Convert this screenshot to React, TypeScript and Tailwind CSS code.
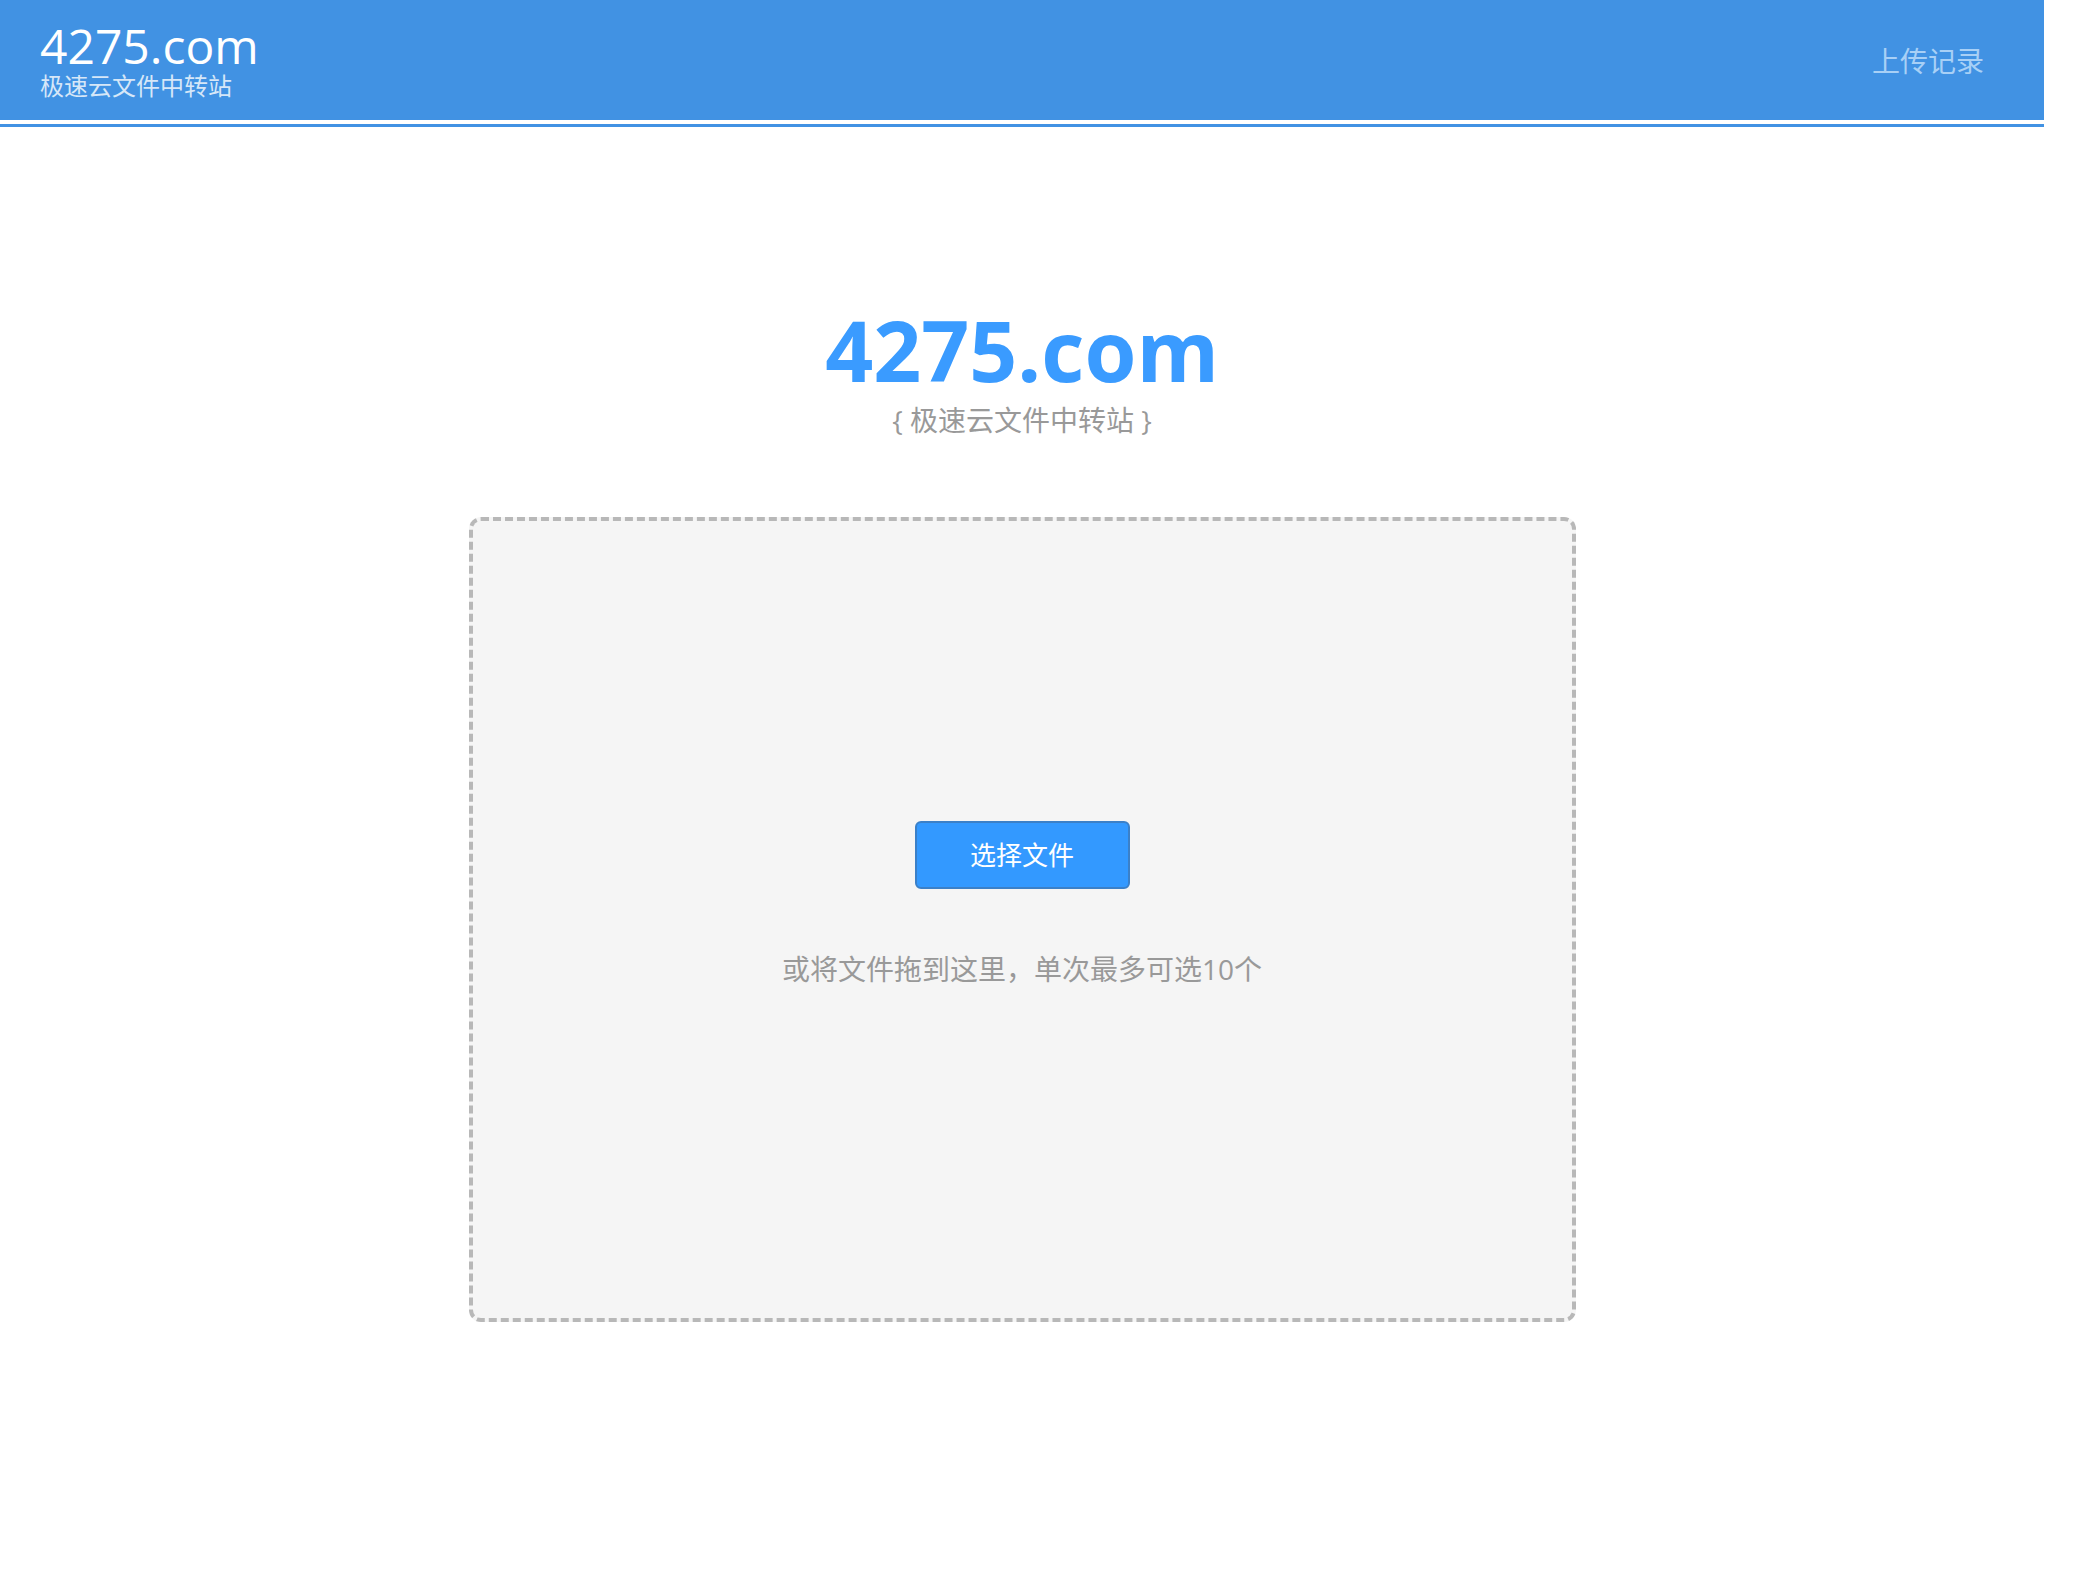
const App = () => {
  return (
    <div className="w-[2044px] min-h-[1860px] bg-white font-['Open_Sans','Noto_Sans_CJK_SC',sans-serif]">
      <header className="h-[120px] bg-[#4192e3] flex items-center justify-between pl-[40px] pr-[60px]">
        <a href="#" className="flex flex-col">
          <span className="text-[48px] leading-[52px] text-white">4275.com</span>
          <span className="text-[24px] leading-[28px] text-[#d6e7f8]">极速云文件中转站</span>
        </a>
        <a href="#" className="text-[28px] leading-[36px] text-[#a8d0f6] mt-[2px]">
          上传记录
        </a>
      </header>
      <div className="mt-[4px] h-[3px] bg-[#4192e3]" />

      <main className="flex flex-col items-center pt-[178px]">
        <h1 className="text-[84px] leading-[90px] font-bold text-[#3a9bff]">4275.com</h1>
        <p className="mt-[5px] text-[28px] leading-[40px] text-[#999]">{"{ 极速云文件中转站 }"}</p>

        <div className="mt-[77px] w-[1107px] h-[805px] border-4 border-dashed border-[#b8b8b8] rounded-[12px] bg-[#f5f5f5] flex flex-col items-center">
          <button className="mt-[300px] w-[215px] h-[68px] rounded-[6px] border-2 border-[#3b80c8] bg-[#3399ff] text-white text-[26px]">
            选择文件
          </button>
          <p className="mt-[60px] text-[28px] leading-[40px] text-[#999]">
            或将文件拖到这里，单次最多可选10个
          </p>
        </div>
      </main>
    </div>
  )
}

export default App
